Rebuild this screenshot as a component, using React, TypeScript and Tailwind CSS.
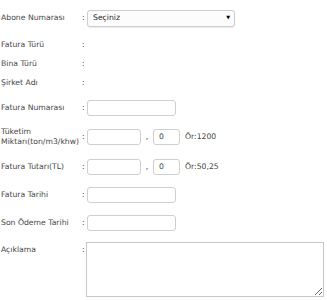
import type { ReactNode } from 'react';

const Row = ({ label, className, children }: { label: ReactNode; className: string; children?: ReactNode }) => (
  <div className={`flex items-center ${className}`}>
    <div className="w-[81px] shrink-0 pl-px leading-[10px]">{label}</div>
    <div className="w-[6px] shrink-0 pl-px">:</div>
    <div className="flex items-center">{children}</div>
  </div>
);

const Box = ({ className, value }: { className: string; value?: string }) => (
  <div className={`h-[16px] rounded-[3px] border border-[#cfcfcf] bg-white pl-[5px] flex items-center ${className}`}>
    {value}
  </div>
);

export default function App() {
  return (
    <div className="w-[327px] h-[300px] bg-white text-[#454545] text-[7.7px] font-['DejaVu_Sans',sans-serif] overflow-hidden">
      <div className="flex flex-col">
        {/* Abone */}
        <Row label="Abone Numarası" className="mt-[8px] h-[20px]">
          <div className="w-[148px] h-[17px] rounded-[3px] border border-[#cdcdcd] bg-[#fcfcfc] shadow-[0_1px_1px_rgba(0,0,0,0.08)] flex items-center justify-between pl-[5px] pr-[4px]">
            <span className="text-[#222]">Seçiniz</span>
            <span className="text-[5px] text-black">▼</span>
          </div>
        </Row>

        <Row label="Fatura Türü" className="mt-[7px] h-[19px]" />
        <Row label="Bina Türü" className="h-[19px]" />
        <Row label="Şirket Adı" className="h-[19px]" />

        <Row label="Fatura Numarası" className="mt-[7px] h-[18px]">
          <Box className="w-[89px]" />
        </Row>

        <Row
          label={
            <>
              <div>Tüketim</div>
              <div>Miktarı(ton/m3/khw)</div>
            </>
          }
          className="mt-[10px] h-[20px]"
        >
          <Box className="w-[54px]" />
          <span className="w-[12px] text-center">,</span>
          <Box className="w-[27px]" value="0" />
          <span className="ml-[5px]">Ör:1200</span>
        </Row>

        <Row label="Fatura Tutarı(TL)" className="mt-[10px] h-[20px]">
          <Box className="w-[54px]" />
          <span className="w-[12px] text-center">,</span>
          <Box className="w-[27px]" value="0" />
          <span className="ml-[5px]">Ör:50,25</span>
        </Row>

        <Row label="Fatura Tarihi" className="mt-[8px] h-[20px]">
          <Box className="w-[89px]" />
        </Row>

        <Row label="Son Ödeme Tarihi" className="mt-[8px] h-[20px]">
          <Box className="w-[89px]" />
        </Row>

        <div className="flex mt-[9px]">
          <div className="w-[81px] shrink-0 pl-px pt-[2px]">Açıklama</div>
          <div className="w-[5px] shrink-0 pl-px pt-[2px]">:</div>
          <textarea className="w-[238px] h-[55px] border border-[#c8c8c8] bg-white outline-none" />
        </div>
      </div>
    </div>
  );
}
